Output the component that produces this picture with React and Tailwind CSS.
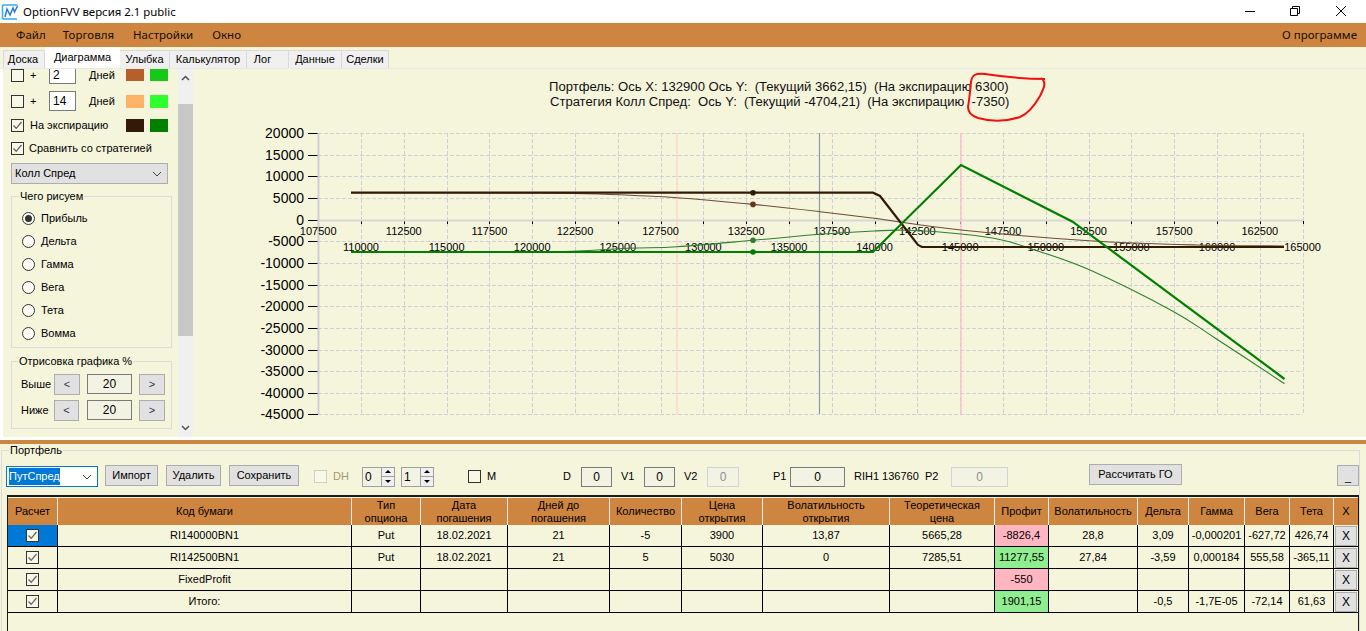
import React from 'react';

const tabs = [
  { name: 'Доска', w: 'w-[42px] pr-[2px]' },
  { name: 'Диаграмма', w: 'w-[75px]', active: true },
  { name: 'Улыбка', w: 'w-[50px]' },
  { name: 'Калькулятор', w: 'w-[77px]' },
  { name: 'Лог', w: 'w-[42px] pr-[10px]' },
  { name: 'Данные', w: 'w-[53px]' },
  { name: 'Сделки', w: 'w-[47px]' },
];

const columns = 'grid grid-cols-[50px_294px_69px_87px_102px_72px_81px_127px_105px_54px_89px_51px_56px_45px_44px_24px]';

const headers = [
  'Расчет', 'Код бумаги', 'Тип\nопциона', 'Дата\nпогашения', 'Дней до\nпогашения', 'Количество', 'Цена\nоткрытия',
  'Волатильность\nоткрытия', 'Теоретическая\nцена', 'Профит', 'Волатильность', 'Дельта', 'Гамма', 'Вега', 'Тета', 'X',
];

const rows = [
  ['RI140000BN1', 'Put', '18.02.2021', '21', '-5', '3900', '13,87', '5665,28', '-8826,4', '28,8', '3,09', '-0,000201', '-627,72', '426,74'],
  ['RI142500BN1', 'Put', '18.02.2021', '21', '5', '5030', '0', '7285,51', '11277,55', '27,84', '-3,59', '0,000184', '555,58', '-365,11'],
  ['FixedProfit', '', '', '', '', '', '', '', '-550', '', '', '', '', ''],
  ['Итого:', '', '', '', '', '', '', '', '1901,15', '', '-0,5', '-1,7E-05', '-72,14', '61,63'],
];

const PROFIT_COL = 8;

function Check({ checked, disabled }) {
  return (
    <span className={`inline-flex h-[13px] w-[13px] shrink-0 items-center justify-center border ${disabled ? 'border-[#cfcfc4] bg-white/40' : 'border-[#333] bg-[#f8f8e6]'}`}>
      {checked && (
        <svg width="11" height="11" viewBox="0 0 11 11">
          <path d="M1.5 5.5 L4.2 8.3 L9.5 2" fill="none" stroke="#666" strokeWidth="1.3" />
        </svg>
      )}
    </span>
  );
}

function Radio({ checked, label }) {
  return (
    <div className="flex h-[23px] items-center pl-[10px]">
      <span className="flex h-[13px] w-[13px] items-center justify-center rounded-full border border-[#333] bg-[#fdfdf6]">
        {checked && <span className="h-[7px] w-[7px] rounded-full bg-[#333]" />}
      </span>
      <span className="ml-[6px]">{label}</span>
    </div>
  );
}

function WinButton({ className, children }) {
  return (
    <button type="button" className={`flex items-center justify-center border border-[#adadad] bg-[#e1e1e1] text-[11px] ${className}`}>
      {children}
    </button>
  );
}

function Spinner({ value }) {
  return (
    <div className="ml-[6px] flex h-[20px] w-[33px] border border-[#a0a0a0] bg-[#f3f3e4] first:ml-0">
      <span className="flex-1 pl-[2px] text-[12px] leading-[18px]">{value}</span>
      <span className="flex w-[13px] flex-col border-l border-[#a0a0a0]">
        <span className="flex flex-1 items-center justify-center border-b border-[#a0a0a0] bg-[#f0f0f0]">
          <span className="h-0 w-0 border-x-[3px] border-b-[3px] border-x-transparent border-b-black" />
        </span>
        <span className="flex flex-1 items-center justify-center bg-[#f0f0f0]">
          <span className="h-0 w-0 border-x-[3px] border-t-[3px] border-x-transparent border-t-black" />
        </span>
      </span>
    </div>
  );
}

function ValueBox({ value, className, disabled }) {
  return (
    <div className={`flex h-[20px] items-center justify-center border bg-[#f3f3e4] text-[12px] ${disabled ? 'border-[#d4d4d4] text-[#8f8f8f]' : 'border-[#7a7a7a]'} ${className}`}>
      {value}
    </div>
  );
}

const oddLabels = [107500, 112500, 117500, 122500, 127500, 132500, 137500, 142500, 147500, 152500, 157500, 162500];
const evenLabels = [110000, 115000, 120000, 125000, 130000, 135000, 140000, 145000, 150000, 155000, 160000, 165000];
const yLabels = [20000, 15000, 10000, 5000, 0, -5000, -10000, -15000, -20000, -25000, -30000, -35000, -40000, -45000];
const xPos = (v) => 318.2 + ((v - 107500) / 2500) * 42.8;
const yPos = (v) => Math.round(133 + ((20000 - v) / 5000) * 21.65);
const gridX = Array.from({ length: 24 }, (_, i) => 107500 + i * 2500);

const expiryPortfolio = '351,192.7 873,192.7 880,196 918,245 922,247 1284,247';
const expiryStrategy = '351,252 873,252 961,165 1072.6,221.7 1284.5,379';
const currentPortfolio = [[351, 192.7], [540, 192.9], [610, 194.5], [677, 197.7], [753, 204.4], [820, 211.7], [874, 218.3], [961, 230], [1089, 240.7], [1197, 245], [1284, 246]];
const currentStrategy = [[351, 252], [540, 252], [628, 248.3], [677, 246.7], [753, 240.3], [820, 234.3], [874, 231], [908, 230.3], [961, 234], [1002, 240], [1035, 250], [1090, 270], [1172, 310.7], [1215, 338], [1284.5, 383.7]];

// сглаживание кривой (catmull-rom)
function smooth(pts) {
  let d = `M${pts[0][0]} ${pts[0][1]}`;
  for (let i = 0; i < pts.length - 1; i++) {
    const p0 = pts[Math.max(0, i - 1)];
    const p1 = pts[i];
    const p2 = pts[i + 1];
    const p3 = pts[Math.min(pts.length - 1, i + 2)];
    const c1x = p1[0] + (p2[0] - p0[0]) / 6;
    const c1y = p1[1] + (p2[1] - p0[1]) / 6;
    const c2x = p2[0] - (p3[0] - p1[0]) / 6;
    const c2y = p2[1] - (p3[1] - p1[1]) / 6;
    d += ` C${c1x} ${c1y} ${c2x} ${c2y} ${p2[0]} ${p2[1]}`;
  }
  return d;
}

function Chart() {
  return (
    <svg width="1173" height="368" viewBox="193 69 1173 368" className="block font-['Liberation_Sans',sans-serif]">
      <text x="549" y="91" fontSize="13.1" className="whitespace-pre" fill="#111">Портфель: Ось X: 132900 Ось Y:  (Текущий 3662,15)  (На экспирацию 6300)</text>
      <text x="550" y="106" fontSize="13.05" className="whitespace-pre" fill="#111">Стратегия Колл Спред:  Ось Y:  (Текущий -4704,21)  (На экспирацию  -7350)</text>

      {yLabels.map((v) => (
        <g key={v}>
          <line x1="318" x2="1302.5" y1={yPos(v) + 0.5} y2={yPos(v) + 0.5} stroke="#cfcfd6" strokeDasharray="4 2" />
          <line x1="308" x2="318" y1={yPos(v) + 0.5} y2={yPos(v) + 0.5} stroke="#000" />
          <text x="304" y={yPos(v) + 5} fontSize="14" textAnchor="end" fill="#000">{v}</text>
        </g>
      ))}
      {gridX.map((v) => (
        <g key={v}>
          <line x1={Math.round(xPos(v)) + 0.5} x2={Math.round(xPos(v)) + 0.5} y1="133" y2="414" stroke="#cfcfd6" strokeDasharray="4 2" />
          <line x1={Math.round(xPos(v)) + 0.5} x2={Math.round(xPos(v)) + 0.5} y1="221" y2="224" stroke="#000" />
        </g>
      ))}
      <line x1="318.5" x2="318.5" y1="133" y2="414" stroke="#d0d0d4" strokeWidth="2" />
      <line x1="318" x2="1302.5" y1="220.5" y2="220.5" stroke="#d8d8d8" strokeWidth="2" />
      <line x1="677" x2="677" y1="133" y2="414" stroke="#ffc8c8" />
      <line x1="961" x2="961" y1="133" y2="414" stroke="#ffc0cb" strokeWidth="1.5" />
      <line x1="819.5" x2="819.5" y1="133" y2="414" stroke="#8a9aa0" strokeWidth="1.2" />

      {oddLabels.map((v) => (
        <text key={v} x={xPos(v)} y="235" fontSize="11" textAnchor="middle" fill="#000">{v}</text>
      ))}
      {evenLabels.map((v) => (
        <text key={v} x={xPos(v)} y="251" fontSize="11" textAnchor="middle" fill="#000">{v}</text>
      ))}

      <path d={smooth(currentPortfolio)} fill="none" stroke="#6f4a35" strokeWidth="1.1" />
      <path d={smooth(currentStrategy)} fill="none" stroke="#2f7f2f" strokeWidth="1.1" />
      <polyline points={expiryPortfolio} fill="none" stroke="#331a06" strokeWidth="2.2" />
      <polyline points={expiryStrategy} fill="none" stroke="#008000" strokeWidth="2.2" />

      <circle cx="753" cy="192.7" r="2.8" fill="#331a06" />
      <circle cx="753" cy="204.4" r="2.8" fill="#6b3518" />
      <circle cx="753" cy="240.3" r="2.8" fill="#2f7f2f" />
      <circle cx="753" cy="252" r="2.8" fill="#008000" />

      <path
        d="M1045 79 C1030 79 1005 77 985 74 C975 73 972 75 971 82 C970 92 969 102 968 107 C968 113 972 116 978 118 C992 122 1008 121 1020 117 C1030 113 1036 103 1040 96 C1044 88 1047 82 1041 78"
        fill="none"
        stroke="#f01010"
        strokeWidth="2"
      />
    </svg>
  );
}

export default function App() {
  return (
    <div className="flex h-[631px] w-[1366px] flex-col overflow-hidden bg-white font-['Liberation_Sans',sans-serif] text-[11px] text-black">
      {/* заголовок окна */}
      <div className="flex h-[23px] shrink-0 items-center">
        <svg width="18" height="18" viewBox="0 0 18 18" className="ml-[1px]">
          <path d="M1.5 2 H16.5 M1.5 2 V16" fill="none" stroke="#35b0f0" strokeWidth="1.6" />
          <path d="M1.5 16 H16" fill="none" stroke="#35b0f0" strokeWidth="1.6" />
          <path d="M4 14 L6 6 L9 12 L12 5 L13.5 9 L16.5 3" fill="none" stroke="#1f78d8" strokeWidth="1.4" />
        </svg>
        <span className="ml-[4px] font-['Noto_Sans',sans-serif] text-[11.4px]">OptionFVV версия 2.1 public</span>
        <div className="ml-auto flex items-center">
          <svg width="10" height="10" viewBox="0 0 10 10" className="mr-[35px] mb-[2px]"><path d="M0 5.5 H10" stroke="#000" /></svg>
          <svg width="10" height="10" viewBox="0 0 10 10" className="mr-[36px] mb-[2px]">
            <path d="M0.5 2.5 H7.5 V9.5 H0.5 Z M2.5 2.5 V0.5 H9.5 V7.5 H7.5" fill="none" stroke="#000" />
          </svg>
          <svg width="10" height="10" viewBox="0 0 10 10" className="mr-[20px] mb-[2px]"><path d="M0 0 L10 10 M10 0 L0 10" stroke="#000" /></svg>
        </div>
      </div>

      {/* меню */}
      <div className="flex h-[24px] shrink-0 items-center bg-[#cd853f] font-['Noto_Sans',sans-serif] text-[11.5px] text-[#1a0d00]">
        <span className="ml-[16px]">Файл</span>
        <span className="ml-[17px]">Торговля</span>
        <span className="ml-[19px]">Настройки</span>
        <span className="ml-[19px]">Окно</span>
        <span className="ml-auto mr-[9px]">О программе</span>
      </div>

      {/* вкладки */}
      <div className="flex h-[21px] shrink-0 items-end bg-[#f5f5dc] pl-[3px]">
        {tabs.map((t) => (
          <div
            key={t.name}
            className={t.active
              ? `${t.w} flex h-[21px] items-center justify-center bg-white pb-[1px]`
              : `${t.w} flex h-[18px] items-center justify-center border border-b-0 border-l-0 border-[#d9d9d9] bg-[#f0f0f0] first:border-l`}
          >
            {t.name}
          </div>
        ))}
      </div>

      {/* страница вкладки */}
      <div className="flex h-[369px] shrink-0 border-t border-[#e8e8e8] bg-white pl-[3px]">
        <div className="h-[368px] w-[175px] shrink-0 overflow-hidden bg-[#f5f5dc] pl-[8px]">
          <div className="flex h-[12px] items-center">
            <Check />
            <div className="ml-[6px] flex w-[96px] items-center">
              <span className="w-[19px]">+</span>
              <div className="h-[18px] w-[27px] border border-[#7a7a7a] bg-white pl-[3px] text-[12px] leading-[16px]">2</div>
              <span className="ml-[13px]">Дней</span>
            </div>
            <span className="h-[12px] w-[18px] bg-[#b5602b]" />
            <span className="ml-[6px] h-[12px] w-[18px] bg-[#18c818]" />
          </div>
          <div className="mt-[13px] flex h-[14px] items-center">
            <Check />
            <div className="ml-[6px] flex w-[96px] items-center">
              <span className="w-[19px]">+</span>
              <div className="h-[20px] w-[27px] shrink-0 border border-[#7a7a7a] bg-white pl-[3px] text-[12px] leading-[18px]">14</div>
              <span className="ml-[13px]">Дней</span>
            </div>
            <span className="h-[13px] w-[18px] bg-[#ffb366]" />
            <span className="ml-[6px] h-[13px] w-[18px] bg-[#2eff2e]" />
          </div>
          <div className="mt-[10px] flex h-[14px] items-center">
            <Check checked />
            <div className="ml-[6px] w-[96px]">На экспирацию</div>
            <span className="h-[13px] w-[18px] bg-[#331a06]" />
            <span className="ml-[6px] h-[13px] w-[18px] bg-[#008000]" />
          </div>
          <div className="mt-[9px] flex h-[14px] items-center">
            <Check checked />
            <span className="ml-[5px]">Сравнить со стратегией</span>
          </div>
          <div className="mt-[8px] flex h-[21px] w-[157px] items-center justify-between border border-[#adadad] bg-[#e1e1e1] pl-[3px] pr-[5px]">
            <span>Колл Спред</span>
            <svg width="10" height="6" viewBox="0 0 10 6"><path d="M1 1 L5 5 L9 1" fill="none" stroke="#444" /></svg>
          </div>

          <div className="relative mt-[12px] h-[152px] w-[161px] border border-[#dcdcdc] pt-[10px]">
            <span className="absolute left-[7px] top-[-7px] bg-[#f5f5dc] px-[1px] leading-[13px]">Чего рисуем</span>
            <Radio checked label="Прибыль" />
            <Radio label="Дельта" />
            <Radio label="Гамма" />
            <Radio label="Вега" />
            <Radio label="Тета" />
            <Radio label="Вомма" />
          </div>

          <div className="relative mt-[13px] h-[68px] w-[161px] border border-[#dcdcdc] pl-[9px] pt-[12px]">
            <span className="absolute left-[6px] top-[-7px] bg-[#f5f5dc] px-[1px] leading-[13px]">Отрисовка графика %</span>
            <div className="flex h-[20px] items-center">
              <span className="w-[33px]">Выше</span>
              <WinButton className="h-[21px] w-[26px] text-[#335]">&lt;</WinButton>
              <ValueBox value="20" className="ml-[7px] w-[45px]" />
              <WinButton className="ml-[7px] h-[21px] w-[26px] text-[#335]">&gt;</WinButton>
            </div>
            <div className="mt-[6px] flex h-[20px] items-center">
              <span className="w-[33px]">Ниже</span>
              <WinButton className="h-[21px] w-[25px] text-[#335]">&lt;</WinButton>
              <ValueBox value="20" className="ml-[8px] w-[45px]" />
              <WinButton className="ml-[7px] h-[21px] w-[26px] text-[#335]">&gt;</WinButton>
            </div>
          </div>
        </div>

        {/* скролл */}
        <div className="flex h-[368px] w-[15px] shrink-0 flex-col items-center bg-[#f0f0f0]">
          <div className="flex h-[18px] items-center">
            <svg width="9" height="6" viewBox="0 0 9 6"><path d="M1 5 L4.5 1.5 L8 5" fill="none" stroke="#505050" strokeWidth="1.5" /></svg>
          </div>
          <div className="mt-[17px] h-[232px] w-full bg-[#c8c8c8]" />
          <div className="mt-auto flex h-[18px] items-center">
            <svg width="9" height="6" viewBox="0 0 9 6"><path d="M1 1 L4.5 4.5 L8 1" fill="none" stroke="#505050" strokeWidth="1.5" /></svg>
          </div>
        </div>

        <div className="h-[368px] flex-1 bg-[#f5f5dc]">
          <Chart />
        </div>
      </div>

      <div className="h-[3px] shrink-0 bg-white" />
      <div className="h-[4px] shrink-0 bg-[#cd853f]" />

      {/* портфель */}
      <div className="flex-1 bg-[#f5f5dc] pl-[1px] pr-[6px] pt-[6px]">
        <div className="relative h-[200px] border-l border-r border-t border-[#dcdcdc] pl-[4px]">
          <span className="absolute left-[7px] top-[-7px] bg-[#f5f5dc] px-[1px] leading-[13px]">Портфель</span>

          <div className="flex h-[44px] items-center pb-[1px] pt-[8px]">
            <div className="flex h-[21px] w-[92px] items-center border border-[#0078d7] bg-white pl-[2px] pr-[5px]">
              <span className="bg-[#0078d7] text-white">ПутСпред</span>
              <svg width="10" height="6" viewBox="0 0 10 6" className="ml-auto"><path d="M1 1 L5 5 L9 1" fill="none" stroke="#444" /></svg>
            </div>
            <WinButton className="mb-[2px] ml-[7px] h-[21px] w-[53px]">Импорт</WinButton>
            <WinButton className="mb-[2px] ml-[8px] h-[21px] w-[55px]">Удалить</WinButton>
            <WinButton className="mb-[2px] ml-[8px] h-[21px] w-[70px]">Сохранить</WinButton>
            <span className="ml-[15px] flex items-center">
              <Check disabled />
              <span className="ml-[6px] w-[23px] text-[#a39a6a]">DH</span>
            </span>
            <div className="ml-[6px] flex">
              <Spinner value="0" />
              <Spinner value="1" />
            </div>
            <span className="ml-[34px] flex"><Check /></span>
            <span className="ml-[6px] w-[76px]">M</span>
            <span className="w-[18px]">D</span>
            <ValueBox value="0" className="w-[31px]" />
            <span className="ml-[9px] w-[23px]">V1</span>
            <ValueBox value="0" className="w-[31px]" />
            <span className="ml-[9px] w-[23px]">V2</span>
            <ValueBox value="0" className="w-[32px]" disabled />
            <span className="ml-[34px] w-[17px]">P1</span>
            <ValueBox value="0" className="w-[55px]" />
            <span className="ml-[9px] w-[71px]">RIH1 136760</span>
            <span className="w-[26px]">P2</span>
            <ValueBox value="0" className="w-[57px]" disabled />
            <WinButton className="mb-[4px] ml-[81px] h-[21px] w-[93px]">Рассчитать ГО</WinButton>
            <WinButton className="mb-[2px] ml-[155px] h-[21px] w-[22px] items-end">_</WinButton>
          </div>

          {/* таблица */}
          <div className="ml-[1px] h-[140px] border-l border-r border-t-2 border-[#1a1a1a] pt-[1px]">
            <div className={`${columns} h-[27px] bg-[#cd853f]`}>
              {headers.map((h) => (
                <div key={h} className="flex items-center justify-center whitespace-pre-line border-r border-[#eeeeee] text-center leading-[13px] last:border-r-0">
                  {h}
                </div>
              ))}
            </div>
            {rows.map((row, r) => (
              <div key={row[0]} className={`${columns} h-[22px]`}>
                <div className={`flex items-center justify-center border-b border-r border-black ${r === 0 ? 'bg-[#0078d7]' : ''}`}>
                  <Check checked />
                </div>
                {row.map((cell, c) => {
                  let bg = '';
                  if (c === PROFIT_COL) bg = cell.startsWith('-') ? 'bg-[#ffb6c1]' : 'bg-[#90ee90]';
                  return (
                    <div key={c} className={`flex items-center justify-center whitespace-nowrap border-b border-r border-black ${bg}`}>
                      {cell}
                    </div>
                  );
                })}
                <div className="flex items-center justify-center border-b border-black">
                  <WinButton className="h-[20px] w-[22px] text-[12px]">X</WinButton>
                </div>
              </div>
            ))}
          </div>
        </div>
      </div>
    </div>
  );
}
